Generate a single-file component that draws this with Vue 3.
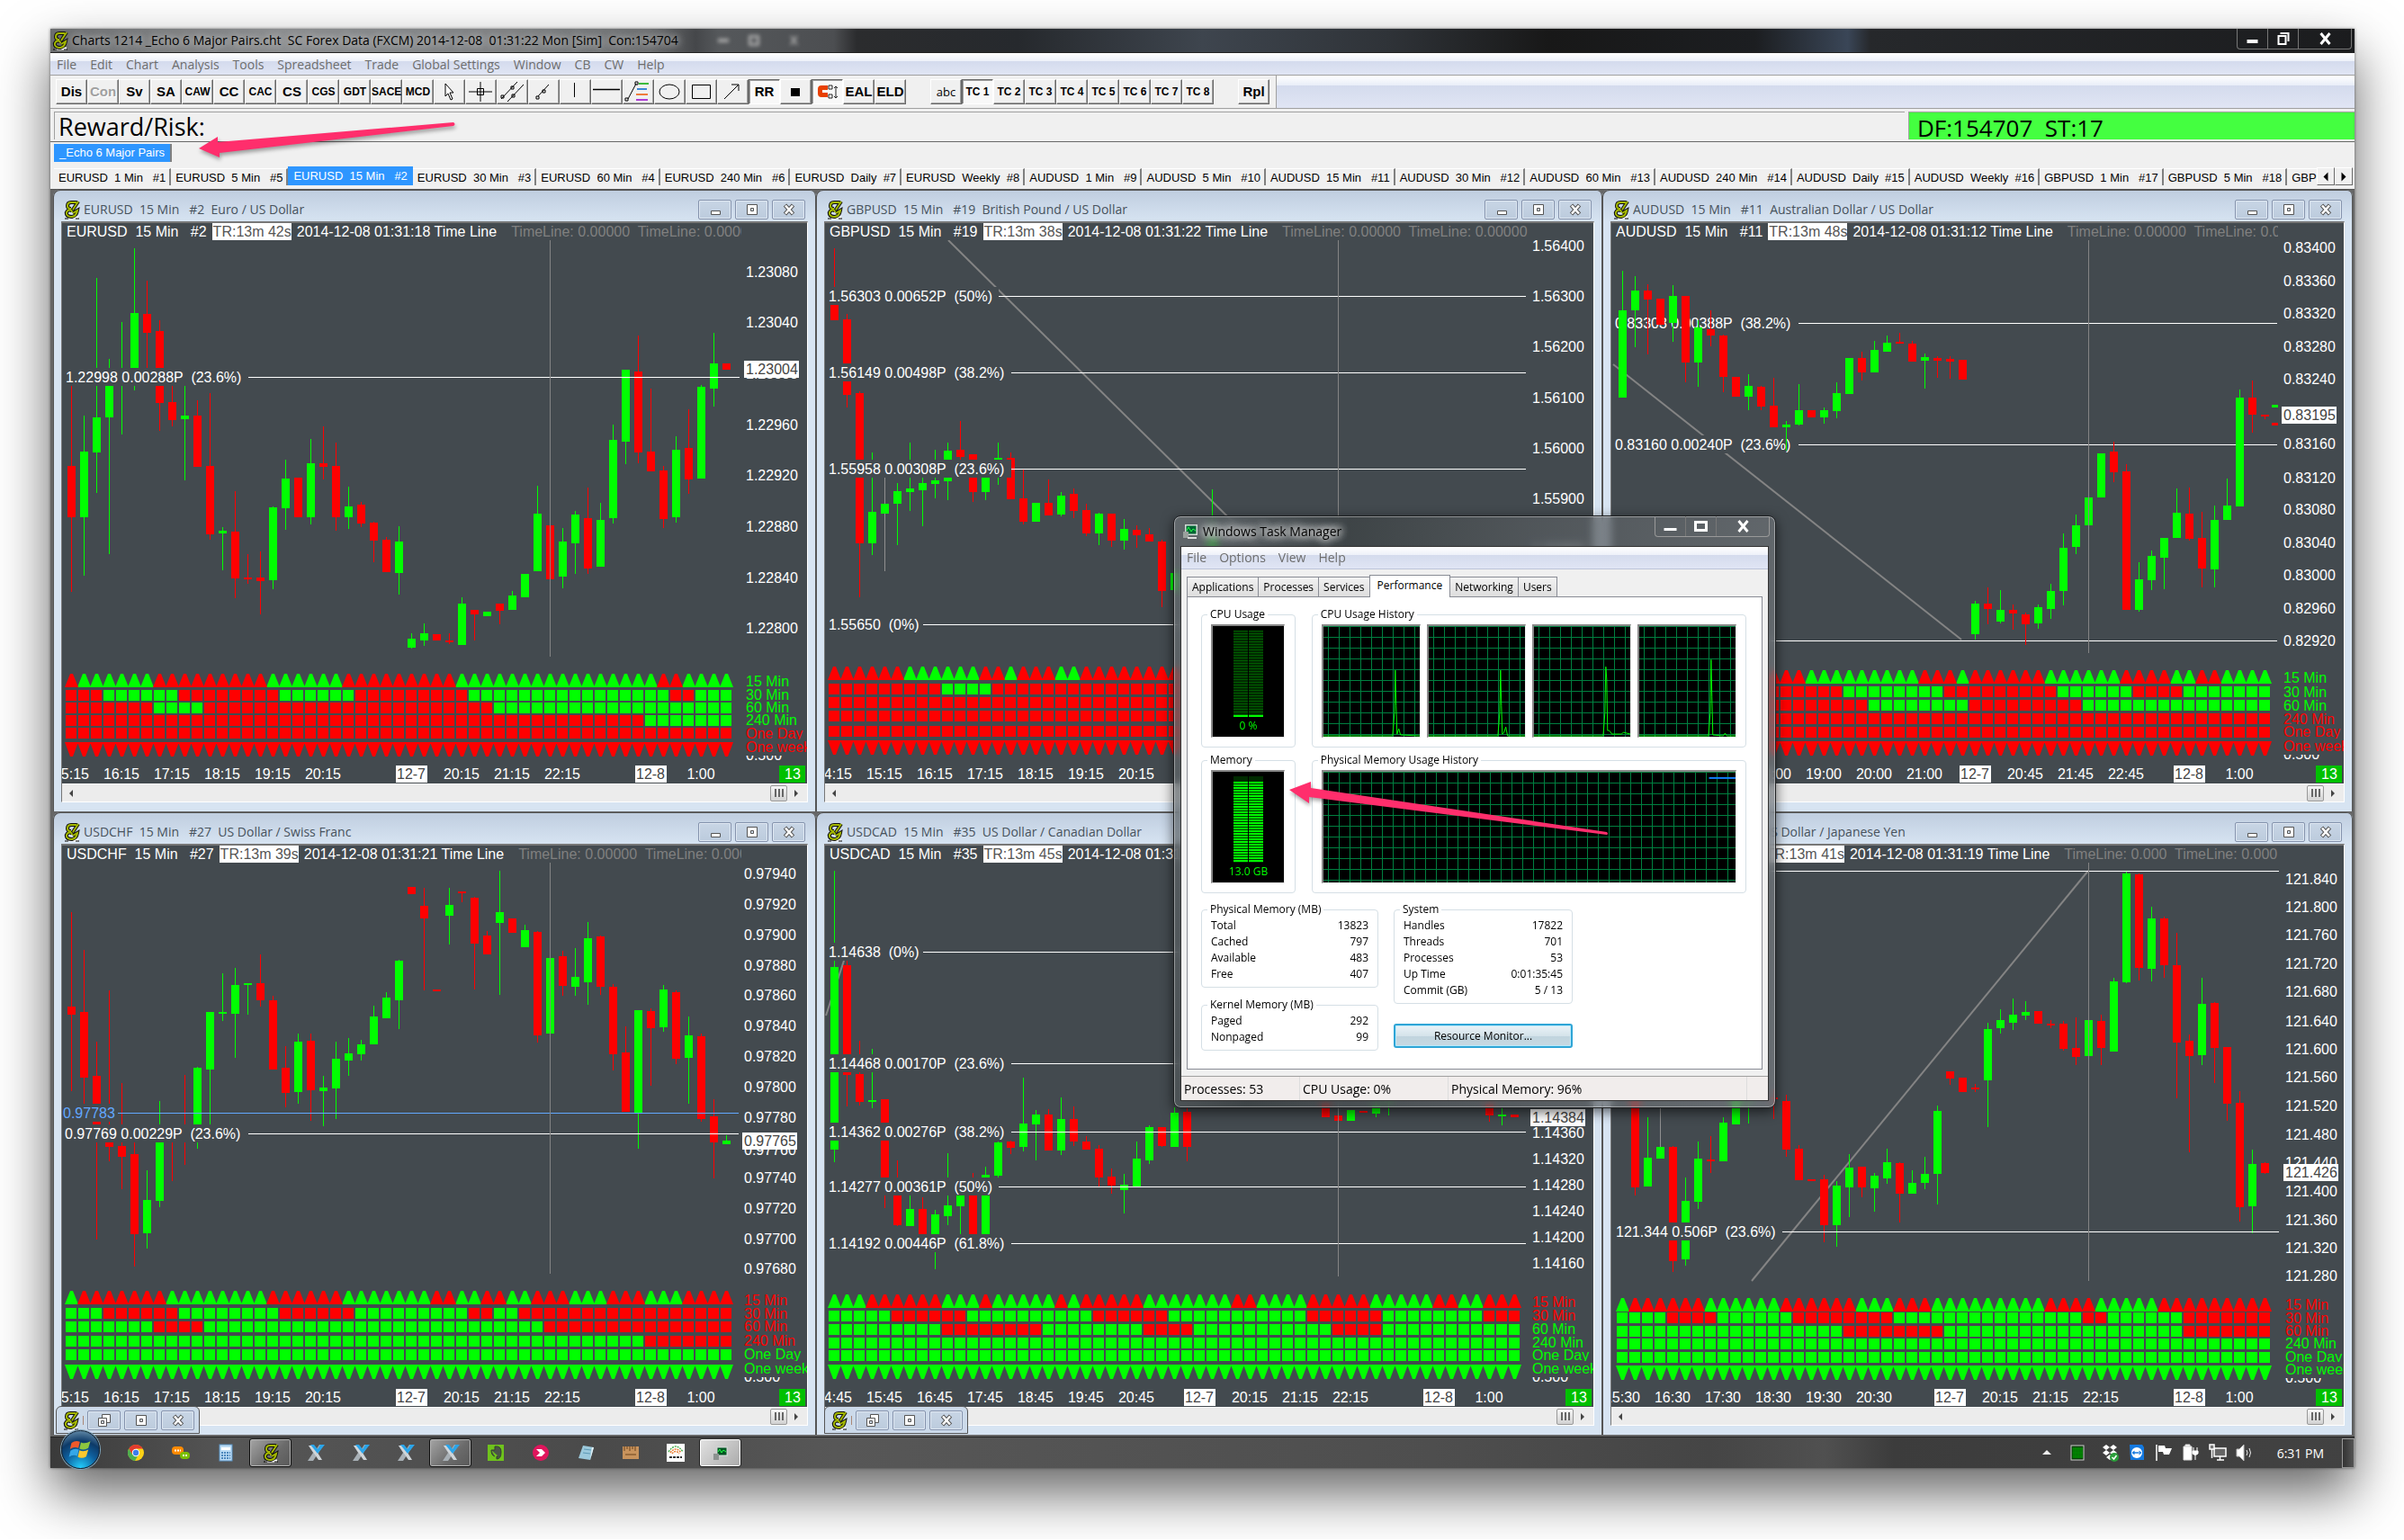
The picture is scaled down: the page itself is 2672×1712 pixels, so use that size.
<script setup>
const appTitle = 'Charts 1214 _Echo 6 Major Pairs.cht  SC Forex Data (FXCM) 2014-12-08  01:31:22 Mon [Sim]  Con:154704'
const feedStatus = 'DF:154707  ST:17'
const toolButtons = ['Dis', 'Con', 'Sv', 'SA', 'CAW', 'CC', 'CAC', 'CS', 'CGS', 'GDT', 'SACE', 'MCD']
const bigLabels = ['Dis', 'Con', 'Sv', 'SA', 'CC', 'CS']
const drawTools = ['cursor', 'cross', 'parallel', 'segment', 'vertical', 'horizontal', 'fib', 'ellipse', 'rect', 'arrow']
const presets = ['TC 1', 'TC 2', 'TC 3', 'TC 4', 'TC 5', 'TC 6', 'TC 7', 'TC 8']
const menus = ['File', 'Edit', 'Chart', 'Analysis', 'Tools', 'Spreadsheet', 'Trade', 'Global Settings', 'Window', 'CB', 'CW', 'Help']
const chartTabs = [
  'EURUSD  1 Min   #1', 'EURUSD  5 Min   #5', 'EURUSD  15 Min   #2', 'EURUSD  30 Min   #3', 'EURUSD  60 Min   #4',
  'EURUSD  240 Min   #6', 'EURUSD  Daily  #7', 'EURUSD  Weekly  #8', 'AUDUSD  1 Min   #9', 'AUDUSD  5 Min   #10',
  'AUDUSD  15 Min   #11', 'AUDUSD  30 Min   #12', 'AUDUSD  60 Min   #13', 'AUDUSD  240 Min   #14', 'AUDUSD  Daily  #15',
  'AUDUSD  Weekly  #16', 'GBPUSD  1 Min   #17', 'GBPUSD  5 Min   #18', 'GBPUSD  15 Min   #19'
]

const frames = ['15 Min', '30 Min', '60 Min', '240 Min', 'One Day', 'One week']
const upperScale = { y: 200, k: 2.178 }
const lowerScale = { y: 900, k: 1.931 }

/* candles: colour, high, body top, body bottom, low; "-" leaves a slot empty.
   rows: run lengths per timeframe. */
const source = [
  {
    sym: 'EURUSD', no: '#2', name: 'Euro / US Dollar', left: '13m 42s', at: '01:31:18', tl: '0.00000',
    view: [69, 267, 828, 604], scale: upperScale, x0: 79, axis: 829, vline: [39, 147, 1154], right: 822,
    candles: 'r497,693,817,998 g571,658,817,958 g237,575,661,757 g433,470,574,906 g344,470,478,616 g166,322,480,510 r245,324,370,480 r340,366,540,607 r497,538,581,597 g497,571,579,727 r534,571,695,695 r517,693,859,871 g840,849,857,945 r753,851,965,1013 r907,963,967,977 r899,963,971,1051 g791,793,969,991 g677,723,795,847 r721,721,817,817 g627,686,817,834 r597,686,695,725 r636,693,817,849 g743,791,817,845 r780,787,832,841 r827,829,873,925 r865,871,949,949 g838,875,951,1003 g1098,1111,1132,1135 g1074,1098,1115,1128 r1099,1099,1116,1116 r1097,1115,1118,1124 g1010,1026,1126,1126 r1041,1041,1053,1115 g1045,1045,1056,1056 r1025,1025,1043,1076 g995,1006,1041,1041 g953,954,1010,1010 g740,808,947,947 r837,837,967,967 g843,875,960,989 g801,810,880,955 r745,819,941,955 g782,823,936,936 g592,629,819,831 g459,460,634,688 r376,464,661,687 r505,658,706,706 r693,703,821,843 g621,653,817,829 r556,649,725,760 g497,501,723,723 g371,444,505,548 r444,444,459,459',
    fibs: [[476, '1.22998 0.00288P  (23.6%)', 73, 276]],
    prices: [['1.23080', 222], ['1.23040', 345], ['1.23000', 468], ['1.22960', 592], ['1.22920', 715], ['1.22880', 839], ['1.22840', 963], ['1.22800', 1085]],
    last: ['1.23004', 458], rowY: [1195, 1234, 1265, 1296, 1326, 1361],
    rows: ['r1g6r9g6r9g16r2g4', 'r3g6r8g6r9g16r2g3', 'r7g4r23g19', 'r46g7', 'r53', 'r53'], tags: 'ggggrr', tagY: [1213, 1246, 1276, 1307, 1339, 1372],
    times: [[0, '15:15'], [4, '16:15'], [8, '17:15'], [12, '18:15'], [16, '19:15'], [20, '20:15'], [27, '12-7'], [31, '20:15'], [35, '21:15'], [39, '22:15'], [46, '12-8'], [50, '1:00']]
  },
  {
    sym: 'GBPUSD', no: '#19', name: 'British Pound / US Dollar', left: '13m 38s', at: '01:31:22', tl: '0.00000',
    view: [917, 267, 854, 604], scale: upperScale, x0: 927, axis: 1703, vline: [40, 147, 1154], right: 1696,
    candles: 'r166,290,339,339 r324,338,520,550 r511,517,879,1010 g660,804,879,908 n720,784,808,947 g734,753,784,884 g637,747,756,802 g720,733,751,838 g653,727,736,771 g637,655,730,775 r583,653,671,690 r664,665,755,780 g720,722,755,775 g637,672,710,738 r659,673,773,773 r700,771,827,835 g782,782,828,828 r725,782,813,813 g756,764,811,814 r746,761,801,818 r784,800,857,862 g806,807,857,884 r808,808,873,888 g822,844,873,896 r836,847,861,891 r843,859,875,875 r871,875,995,1034 g940,951,993,1000 - - g749,860,930,940',
    fibs: [[280, '1.56303 0.00652P  (50%)', 921, 1110], [467, '1.56149 0.00498P  (38.2%)', 921, 1124], [700, '1.55958 0.00308P  (23.6%)', 921, 1124], [1075, '1.55650  (0%)', 921, 1026]],
    diag: [1054, 147, 1450, 1000],
    prices: [['1.56400', 160], ['1.56300', 281], ['1.56200', 403], ['1.56100', 527], ['1.56000', 649], ['1.55900', 771], ['1.55800', 894]],
    rowY: [1178, 1219, 1253, 1286, 1321, 1357],
    rows: ['r6g6r2g1r3g2r35', 'r9g4r42', 'r55', 'r55', 'r55', 'r55'], tags: 'rrrrrr', tagY: [1205, 1239, 1271, 1304, 1336, 1369],
    times: [[0, '14:15'], [4, '15:15'], [8, '16:15'], [12, '17:15'], [16, '18:15'], [20, '19:15'], [24, '20:15']]
  },
  {
    sym: 'AUDUSD', no: '#11', name: 'Australian Dollar / US Dollar', left: '13m 48s', at: '01:31:12', tl: '0.00000',
    view: [1791, 267, 814, 604], scale: upperScale, x0: 1803, axis: 2538, vline: [37, 147, 1145], right: 2531, under: true,
    candles: 'g219,316,527,527 g233,268,316,405 r253,267,290,422 r288,288,350,350 g255,281,347,393 r281,281,443,490 g340,357,442,501 r315,362,377,404 r375,376,477,514 r477,477,525,525 g470,499,525,558 r498,502,549,557 r480,547,600,600 g584,592,600,656 g494,557,592,595 r557,557,575,575 g550,558,575,591 g491,516,560,578 g431,431,519,519 r416,431,467,485 g390,412,467,467 g376,394,416,416 r371,391,395,395 r390,396,440,440 g420,429,438,505 r426,431,437,480 r427,434,439,481 r436,436,484,484 g1019,1026,1100,1113 r987,1025,1039,1076 g993,1041,1069,1074 r1028,1041,1049,1088 r1048,1051,1077,1125 g1028,1034,1074,1086 g978,995,1039,1062 g856,891,995,1030 g810,836,889,906 g769,769,836,836 g662,662,769,769 r633,658,708,732 r688,706,1040,1040 g926,967,1041,1046 g897,910,969,993 g866,866,915,990 g747,806,867,867 r745,808,870,874 r804,866,941,987 g788,823,943,987 g723,788,823,823 g507,527,791,791 r485,528,568,612 r568,568,571,580',
    marks: [['g', 2525, 544], ['r', 2525, 589]],
    fibs: [[347, '0.83303 0.00388P  (38.2%)', 1795, 1999], [640, '0.83160 0.00240P  (23.6%)', 1795, 1999], [1115, '0.82920  (0%)', 1795, 1900]],
    diag: [1793, 446, 2180, 1114],
    prices: [['0.83400', 164], ['0.83360', 243], ['0.83320', 323], ['0.83280', 402], ['0.83240', 482], ['0.83200', 561], ['0.83160', 639], ['0.83120', 720], ['0.83080', 798], ['0.83040', 877], ['0.83000', 957], ['0.82960', 1036], ['0.82920', 1116]],
    last: ['0.83195', 569], rowY: [1187, 1226, 1259, 1291, 1324, 1359],
    rows: ['r15g9r3g1r6g6r4g2r2g4', 'r18g8r9g6r4g7', 'r20g8r9g15', 'r52', 'r52', 'r52'], tags: 'gggrrr', tagY: [1205, 1239, 1271, 1304, 1336, 1369],
    times: [[12, '18:00'], [16, '19:00'], [20, '20:00'], [24, '21:00'], [28, '12-7'], [32, '20:45'], [36, '21:45'], [40, '22:45'], [45, '12-8'], [49, '1:00']]
  },
  {
    sym: 'USDCHF', no: '#27', name: 'US Dollar / Swiss Franc', left: '13m 39s', at: '01:31:21', tl: '0.00000',
    view: [69, 959, 828, 605], scale: lowerScale, x0: 79, axis: 827, vline: [39, 114, 996], right: 821, docked: true,
    candles: 'r221,423,440,605 r301,434,575,632 r499,572,677,923 r388,676,724,755 r587,722,745,815 r715,740,911,980 g774,838,910,942 g626,690,840,854 r675,690,694,797 r570,690,694,763 g553,554,677,728 g434,434,558,677 g351,434,437,454 g340,377,438,533 g373,373,377,440 r311,372,409,422 r400,409,558,558 r507,554,608,640 g481,498,606,631 r480,496,602,668 g572,597,604,680 g498,535,599,664 g490,523,539,572 g494,504,525,539 g421,444,504,504 g392,404,448,448 g323,324,409,471 r167,167,182,182 r168,206,234,388 r387,387,389,389 g168,205,228,290 r176,176,179,199 r188,190,288,387 r261,271,311,311 g131,220,243,398 r233,234,265,265 g247,259,295,295 r261,263,484,501 g319,319,481,481 r304,315,378,400 g297,359,380,400 g241,276,370,419 r271,273,381,397 r374,381,525,560 r466,521,649,649 g431,431,650,728 r426,433,470,592 g377,386,467,477 r389,392,535,546 g444,485,533,631 r480,487,664,670 r621,659,715,792 g699,711,718,718',
    fibs: [[650, '0.97783', 70, 131, '#62a8ff'], [696, '0.97769 0.00229P  (23.6%)', 72, 276]],
    prices: [['0.97940', 138], ['0.97920', 203], ['0.97900', 269], ['0.97880', 335], ['0.97860', 398], ['0.97840', 464], ['0.97820', 529], ['0.97800', 595], ['0.97780', 660], ['0.97760', 730], ['0.97740', 790], ['0.97720', 856], ['0.97700', 922], ['0.97680', 985]],
    last: ['0.97765', 711], rowY: [1033, 1070, 1099, 1130, 1159, 1191],
    rows: ['g1r7g8r6g7r2g2r2g2r3g3r3g3r4', 'g3r6g8r6g9r2g2r17', 'g7r4g27r15', 'g46r7', 'g53', 'g53'], tags: 'rrrrgg', tagY: [1052, 1081, 1109, 1140, 1169, 1200],
    times: [[0, '15:15'], [4, '16:15'], [8, '17:15'], [12, '18:15'], [16, '19:15'], [20, '20:15'], [27, '12-7'], [31, '20:15'], [35, '21:15'], [39, '22:15'], [46, '12-8'], [50, '1:00']]
  },
  {
    sym: 'USDCAD', no: '#35', name: 'US Dollar / Canadian Dollar', left: '13m 45s', at: '01:31:22', tl: '0.00000',
    view: [917, 959, 854, 605], scale: lowerScale, x0: 927, axis: 1703, vline: [40, 114, 1003], right: 1696, docked: true,
    candles: 'g131,338,730,756 r324,334,570,637 r497,568,628,635 g514,624,627,641 r621,622,792,855 r753,800,893,895 g810,857,895,895 r832,857,911,911 g859,869,915,987 g738,850,873,892 g825,828,852,911 r780,820,911,911 g767,784,911,911 g712,714,785,792 r710,713,727,740 g575,674,725,734 g645,655,676,753 r643,654,731,731 g618,664,731,742 r637,664,713,722 r700,713,730,730 r720,728,790,809 r771,787,808,825 g782,806,817,867 g713,749,809,809 g678,682,753,761 r681,682,723,725 g640,650,725,725 r640,649,725,755 - - - - - - - - - - r620,630,660,660 r657,657,669,669 g645,645,668,668 r647,647,651,651 g620,635,653,661 g600,620,622,656 - - - - - - - r620,632,657,671 g640,655,658,678 r655,655,661,661',
    fibs: [[306, '1.14638  (0%)', 921, 1026], [544, '1.14468 0.00170P  (23.6%)', 921, 1124], [692, '1.14362 0.00276P  (38.2%)', 921, 1124], [810, '1.14277 0.00361P  (50%)', 921, 1110], [930, '1.14192 0.00446P  (61.8%)', 921, 1124]],
    diag: [918, 443, 938, 324],
    prices: [['1.14360', 694], ['1.14320', 750], ['1.14280', 806], ['1.14240', 862], ['1.14200', 918], ['1.14160', 974]],
    last: ['1.14384', 661], rowY: [1041, 1076, 1105, 1134, 1161, 1191],
    rows: ['g3r6g3r1g5r1g1r5g7r2g4r5g5r2g2r3', 'g5r6g10r6g11r6g8r3', 'g9r8g8r4g11r4g11', 'g55', 'g55', 'g55'], tags: 'rrgggg', tagY: [1057, 1086, 1114, 1143, 1171, 1200],
    times: [[0, '14:45'], [4, '15:45'], [8, '16:45'], [12, '17:45'], [16, '18:45'], [20, '19:45'], [24, '20:45'], [29, '12-7'], [33, '20:15'], [37, '21:15'], [41, '22:15'], [48, '12-8'], [52, '1:00']]
  },
  {
    sym: 'USDJPY', no: '#43', name: 'US Dollar / Japanese Yen', left: '13m 41s', at: '01:31:19', tl: '0.000',
    view: [1791, 959, 814, 605], scale: lowerScale, x0: 1803, axis: 2540, vline: [37, 114, 1011], right: 2533,
    candles: '- r600,600,811,828 g660,747,809,809 n640,724,749,749 r722,724,969,993 g790,840,966,979 g713,749,842,858 r701,751,755,780 g660,672,755,755 g600,600,676,676 g600,618,620,674 - r600,618,620,665 r612,626,730,746 r720,728,795,795 r793,793,795,795 r784,794,893,928 g798,807,893,938 g740,769,811,874 r767,767,811,832 g780,786,813,863 g728,757,792,803 r757,758,825,886 g774,801,825,825 g745,782,801,815 g635,647,782,847 r561,562,577,591 r575,575,607,607 r588,596,600,607 g457,471,581,682 g429,452,469,481 g406,440,458,474 g411,434,442,451 r433,433,460,460 r452,459,463,470 r454,459,514,518 r446,512,531,549 g452,452,529,529 r441,454,512,549 g361,369,519,519 g132,138,371,373 r138,139,340,367 g209,234,342,369 r230,234,334,361 r265,334,500,619 r483,496,529,735 g361,417,527,549 r414,416,512,587 r509,510,631,669 r604,629,854,885 g730,761,852,909 r757,758,780,783',
    fibs: [[131, '121.850  (0%)', 1795, 1900], [905, '121.344 0.506P  (23.6%)', 1796, 1981]],
    diag: [1947, 1011, 2321, 131],
    prices: [['121.840', 148], ['121.800', 209], ['121.760', 269], ['121.720', 331], ['121.680', 391], ['121.640', 453], ['121.600', 514], ['121.560', 574], ['121.520', 636], ['121.480', 697], ['121.440', 757], ['121.400', 819], ['121.360', 880], ['121.320', 941], ['121.280', 1001]],
    last: ['121.426', 779], rowY: [1049, 1080, 1108, 1136, 1164, 1193],
    rows: ['g1r6g6r6g3r3g9r4g5r9', 'g4r4g6r8g15r2g6r7', 'g18r8g19r7', 'g52', 'g52', 'g52'], tags: 'rrrggg', tagY: [1063, 1091, 1118, 1146, 1174, 1202],
    times: [[0, '15:30'], [4, '16:30'], [8, '17:30'], [12, '18:30'], [16, '19:30'], [20, '20:30'], [26, '12-7'], [30, '20:15'], [34, '21:15'], [38, '22:15'], [45, '12-8'], [49, '1:00']]
  }
]

const PITCH = 14
const color = { g: '#00ff00', r: '#ff0000', n: '#00ff00' }

const charts = source.map((c) => {
  const Y = (v) => Math.round(c.scale.y + v / c.scale.k)
  const bars = []
  c.candles.split(' ').forEach((s, i) => {
    if (s === '-') return
    const [h, t, b, l] = s.slice(1).split(',').map(Number)
    const x = c.x0 + i * PITCH
    bars.push({ x, h: Y(h), t: Y(t), b: Math.max(Y(b), Y(t) + 2), l: Y(l), c: color[s[0]], wick: s[0] === 'n' ? '#909090' : color[s[0]] })
  })
  const cells = []
  const triangles = { g: '', r: '' }
  c.rows.forEach((runs, r) => {
    let slot = 0
    const y = Y(c.rowY[r])
    for (const [, k, n] of runs.matchAll(/([gr])(\d+)/g)) {
      for (let j = 0; j < Number(n); j++, slot++) {
        const x = c.x0 + slot * PITCH
        if (r === 0) triangles[k] += `M${x - 7} ${y + 15}h15l-6 -15h-3z`
        else if (r === 5) triangles[k] += `M${x - 7} ${y}h15l-6 16h-3z`
        else cells.push({ x: x - 6, y, c: color[k] })
      }
    }
  })
  const bottom = c.view[1] + c.view[3]
  return {
    ...c,
    bars, cells, triangles,
    title: `${c.sym}  15 Min   ${c.no}  ${c.name}`,
    vb: c.view.join(' '),
    vx: c.x0 + c.vline[0] * PITCH - (c.x0 === 79 ? 14 : 0),
    vy1: Y(c.vline[1]), vy2: Y(c.vline[2]),
    lines: c.fibs.map(([v, text, x, from, stroke]) => ({ y: Y(v), text, x, from, stroke: stroke || '#ffffff' })),
    slope: c.diag && { x1: c.diag[0], y1: Y(c.diag[1]), x2: c.diag[2], y2: Y(c.diag[3]) },
    ticks: c.prices.map(([text, v]) => ({ text, y: Y(v) })),
    lastPrice: c.last && { text: c.last[0], y: Y(c.last[1]) },
    extra: (c.marks || []).map(([k, x, v]) => ({ x, y: Y(v), c: color[k] })),
    labels: frames.map((text, i) => ({ text, y: Y(c.tagY[i]), c: color[c.tags[i]] })),
    stamps: c.times.map(([slot, text]) => ({ text, x: c.x0 + slot * PITCH, day: text.includes('-') })),
    timeY: bottom - 11,
    badgeX: c.view[0] + c.view[2] - 31
  }
})

const physical = [['Total', '13823'], ['Cached', '797'], ['Available', '483'], ['Free', '407']]
const kernel = [['Paged', '292'], ['Nonpaged', '99']]
const system = [['Handles', '17822'], ['Threads', '701'], ['Processes', '53'], ['Up Time', '0:01:35:45'], ['Commit (GB)', '5 / 13']]
const taskTabs = ['Applications', 'Processes', 'Services', 'Performance', 'Networking', 'Users']
const cpuTraces = [
  'M0 124H79L81 98L82 50L83 90L84 122L86 116L88 123L110 124',
  'M0 124H79L81 98L82 50L83 90L84 122L86 120L88 114L90 124H110',
  'M0 124H79L81 98L82 46L83 60L84 118L86 118L89 122L100 122L102 120L110 122',
  'M0 124H79L81 98L82 38L83 80L84 123L96 124L98 121L100 124H110'
]
const apps = [
  ['chrome', 'Chrome'], ['joinme', 'join.me'], ['calc', 'Calculator'], ['chart', 'Charts', 'on'], ['x', 'X one'], ['x', 'X two'], ['x', 'X three'],
  ['x', 'X four', 'on'], ['evernote', 'Evernote'], ['pink', 'Remote'], ['note', 'Notepad'], ['ruler', 'Ruler'], ['alpari', 'Alpari'], ['monitor', 'Task Manager', 'lit']
]
</script>

<template>
  <main class="shell">
    <svg class="defs" width="0" height="0" aria-hidden="true">
      <symbol id="logo" viewBox="0 0 18 22">
        <path d="M3 20h13" stroke="#fff" stroke-width="3" />
        <path d="M1 21h4m8 0h4" stroke="#000" />
        <path d="M16 2L10 11M14 3H8Q4 3 4 7q0 3 4 3M4 12q5-2 5 2M8 11q-6 1-5 5 1 3 6 3 5-1 6-7l-5 3" fill="none" stroke="#111" stroke-width="4" />
        <path d="M16 2L10 11M14 3H8Q4 3 4 7q0 3 4 3M4 12q5-2 5 2M8 11q-6 1-5 5 1 3 6 3 5-1 6-7l-5 3" fill="none" stroke="#a4b800" stroke-width="2" />
      </symbol>
      <symbol id="g-min" viewBox="0 0 16 16"><path d="M3.500 9.500h10v4h-10z" fill="#fff" stroke="#555" /></symbol>
      <symbol id="g-max" viewBox="0 0 16 16"><path d="M2.500 2.500h11v11h-11z" fill="#fff" stroke="#555" /><path d="M6.500 6.500h3v3h-3z" fill="#d0dcea" stroke="#555" /></symbol>
      <symbol id="g-restore" viewBox="0 0 16 16"><path d="M5.500 1.500h9v9h-9z" fill="#fff" stroke="#555" /><path d="M1.500 5.500h9v9h-9z" fill="#fff" stroke="#555" /><path d="M4.500 8.500h3v3h-3z" fill="#d0dcea" stroke="#555" /></symbol>
      <symbol id="g-close" viewBox="0 0 16 16"><path d="M3.500 3l9 10M12.500 3l-9 10" stroke="#555" stroke-width="4.600" /><path d="M4 3.500l8 9M12 3.500l-8 9" stroke="#fff" stroke-width="2.600" /></symbol>
    </svg>

    <header class="titlebar">
      <svg class="logo"><use href="#logo" /></svg>
      <h1>{{ appTitle }}</h1>
      <span class="ghost" aria-hidden="true"><i></i><i class="sq"></i><i class="x">X</i></span>
      <div class="syscmds">
        <button aria-label="Minimize"><svg viewBox="0 0 16 16"><path d="M2 9h12v4H2z" fill="#fff" /></svg></button>
        <button aria-label="Restore"><svg viewBox="0 0 16 16"><path d="M5 2h9v9M3 5h8v9H3z" fill="none" stroke="#fff" stroke-width="2" /></svg></button>
        <button class="wide" aria-label="Close"><svg viewBox="0 0 16 16"><path d="M3 2l10 12M13 2L3 14" stroke="#fff" stroke-width="3" /></svg></button>
      </div>
    </header>

    <nav class="menubar"><button v-for="m in menus" :key="m">{{ m }}</button></nav>

    <div class="toolbar">
      <div class="tools">
        <button v-for="b in toolButtons" :key="b" :class="{ big: bigLabels.includes(b), dim: b === 'Con' }">{{ b }}</button>
        <button v-for="t in drawTools" :key="t" :aria-label="t">
          <svg class="tool" viewBox="0 0 32 24" fill="none" stroke="#000">
            <path v-if="t === 'cursor'" d="M12 3v14l3-3 3 7 2-1-3-7h4z" fill="#fff" />
            <path v-else-if="t === 'cross'" d="M16 1v22M3 12h26M12.500 8.500h7v7h-7z" />
            <path v-else-if="t === 'parallel'" d="M4 20L22 1M11 23L29 4M4 16h3v3H4zM15 6h3v3h-3zM16 15h3v3h-3z" />
            <path v-else-if="t === 'segment'" d="M10 17L22 4M8 17h3v3H8zM15 10h3v3h-3z" />
            <path v-else-if="t === 'vertical'" d="M15.500 2v16" />
            <path v-else-if="t === 'horizontal'" d="M1 9.500h30" stroke-width="1.500" />
            <g v-else-if="t === 'fib'">
              <path d="M5 20L14 3M2 19h3v3H2zM13 1h3v3h-3z" />
              <path d="M17 3h11" stroke="#0a0" stroke-width="1.500" /><path d="M15 9h11" stroke="#06c" stroke-width="1.500" />
              <path d="M14 15h13" stroke="#e50" stroke-width="1.500" /><path d="M14 21h13" stroke="#90c" stroke-width="1.500" />
            </g>
            <ellipse v-else-if="t === 'ellipse'" cx="16" cy="12" rx="11" ry="8" />
            <path v-else-if="t === 'rect'" d="M6.500 4.500h20v15h-20z" />
            <path v-else d="M7 20L23 4M15 4h8v7" />
          </svg>
        </button>
        <button class="big down">RR</button>
        <button aria-label="Stop"><svg class="tool" viewBox="0 0 32 24"><path d="M11 8h10v9H11z" /></svg></button>
        <button class="down" aria-label="Magnet">
          <svg class="tool" viewBox="0 0 32 24"><path d="M17 5H10Q6 5 6 9v5q0 4 4 4h7v-5h-6v-3h6z" fill="#e84000" /><path d="M18 5h4v4h-4zM18 15h4v4h-4zM26 6v13m-2-2l2 2 2-2M24 8l2-2 2 2" fill="none" stroke="#222" /></svg>
        </button>
        <button class="big">EAL</button><button class="big">ELD</button>
        <button class="plain gap">abc</button>
        <button v-for="p in presets" :key="p" :class="{ down: p === 'TC 1' }">{{ p }}</button>
        <button class="big gap">Rpl</button>
      </div>
    </div>

    <div class="status"><span class="rr">Reward/Risk:</span><span class="feed">{{ feedStatus }}</span></div>

    <div class="books"><button class="tab on">_Echo 6 Major Pairs</button></div>
    <div class="tabs">
      <div class="strip"><button v-for="(t, i) in chartTabs" :key="t" class="tab" :class="{ on: i === 2 }">{{ t }}</button></div>
      <button class="scroll" aria-label="Scroll tabs left"><svg viewBox="0 0 8 10"><path d="M6 1v8L2 5z" /></svg></button>
      <button class="scroll" aria-label="Scroll tabs right"><svg viewBox="0 0 8 10"><path d="M2 1v8l4-4z" /></svg></button>
    </div>

    <section class="mdi">
      <article v-for="c in charts" :key="c.sym" class="child">
        <header class="caption">
          <svg class="logo"><use href="#logo" /></svg>
          <h2>{{ c.title }}</h2>
          <button aria-label="Minimize"><svg><use href="#g-min" /></svg></button>
          <button aria-label="Maximize"><svg><use href="#g-max" /></svg></button>
          <button aria-label="Close"><svg><use href="#g-close" /></svg></button>
        </header>
        <div class="frame">
          <p class="info">
            <span>{{ `${c.sym}  15 Min   ${c.no}` }}</span><mark>TR:{{ c.left }}</mark><span>2014-12-08 {{ c.at }} Time Line</span>
            <span class="muted">{{ `TimeLine: ${c.tl}  TimeLine: ${c.tl}` }}</span>
          </p>
          <svg class="plot" :viewBox="c.vb">
            <g v-if="c.slope"><line :x1="c.slope.x1" :y1="c.slope.y1" :x2="c.slope.x2" :y2="c.slope.y2" stroke="#848484" stroke-width="2" /></g>
            <component :is="'g'" v-for="pass in (c.under ? ['fib', 'bars'] : ['bars', 'fib'])" :key="pass">
              <g v-if="pass === 'bars'" shape-rendering="crispEdges">
                <template v-for="b in c.bars" :key="b.x">
                  <rect :x="b.x" :y="b.h" width="1" :height="b.l - b.h" :fill="b.wick" />
                  <rect :x="b.x - 4" :y="b.t" width="9" :height="b.b - b.t" :fill="b.c" />
                </template>
                <rect v-for="m in c.extra" :key="m.y" :x="m.x" :y="m.y" width="7" height="3" :fill="m.c" />
              </g>
              <g v-else>
                <template v-for="f in c.lines" :key="f.y">
                  <rect :x="f.x" :y="f.y - 10" :width="f.from - f.x" height="20" fill="#434a4f" />
                  <text :x="f.x" :y="f.y + 6" :fill="f.stroke">{{ f.text }}</text>
                  <rect :x="f.from" :y="f.y" :width="c.right - f.from" height="1" :fill="f.stroke" />
                </template>
              </g>
            </component>
            <rect :x="c.vx" :y="c.vy1" width="1" :height="c.vy2 - c.vy1" fill="#848484" />
            <text v-for="t in c.ticks" :key="t.y" :x="c.axis" :y="t.y + 6">{{ t.text }}</text>
            <g v-if="c.lastPrice">
              <rect :x="c.axis - 2" :y="c.lastPrice.y - 9" width="61" height="19" fill="#fff" />
              <text :x="c.axis" :y="c.lastPrice.y + 6" class="dark">{{ c.lastPrice.text }}</text>
            </g>
            <path :d="c.triangles.g" fill="#00ff00" /><path :d="c.triangles.r" fill="#ff0000" />
            <rect v-for="q in c.cells" :key="q.x + '-' + q.y" :x="q.x" :y="q.y" width="12" height="12" :fill="q.c" shape-rendering="crispEdges" />
            <text :x="c.axis" :y="c.labels[5].y + 15">0.500</text>
            <g v-for="l in c.labels" :key="l.text">
              <rect :x="c.axis - 1" :y="l.y - 8" width="90" height="18" fill="#434a4f" />
              <text :x="c.axis" :y="l.y + 6" :fill="l.c">{{ l.text }}</text>
            </g>
            <g v-for="s in c.stamps" :key="s.x">
              <rect v-if="s.day" :x="s.x - 17" :y="c.timeY - 9" width="35" height="19" fill="#fff" />
              <text :x="s.x" :y="c.timeY + 6" :class="{ dark: s.day }" text-anchor="middle">{{ s.text }}</text>
            </g>
            <rect :x="c.badgeX" :y="c.timeY - 9" width="29" height="19" fill="#00c000" />
            <text :x="c.badgeX + 15" :y="c.timeY + 6" text-anchor="middle">13</text>
          </svg>
          <div class="hscroll">
            <button aria-label="Scroll left"><svg viewBox="0 0 8 10"><path d="M6 1v8L2 5z" /></svg></button>
            <span class="track"></span>
            <button class="thumb" aria-label="Scroll position"><i></i><i></i><i></i></button>
            <button aria-label="Scroll right"><svg viewBox="0 0 8 10"><path d="M2 1v8l4-4z" /></svg></button>
          </div>
        </div>
        <div v-if="c.docked" class="docked">
          <svg class="logo"><use href="#logo" /></svg><i></i>
          <button aria-label="Restore"><svg><use href="#g-restore" /></svg></button>
          <button aria-label="Maximize"><svg><use href="#g-max" /></svg></button>
          <button aria-label="Close"><svg><use href="#g-close" /></svg></button>
        </div>
      </article>
    </section>

    <footer class="taskbar">
      <button class="orb" aria-label="Start">
        <svg viewBox="0 0 24 24">
          <path d="M3 6q4-3 8-1l-1.500 6q-4-2-8 1z" fill="#f0592a" /><path d="M12 5.500q4 2 9-1l-2 6.500q-4 2.500-8.500.500z" fill="#8cc63f" />
          <path d="M1 13.500q4-3 8-1l-1.500 6q-4-2-8 1z" transform="translate(1 0)" fill="#35a7e8" /><path d="M10.500 13q4 2 8.500-.500l-2 6.500q-4 2.500-8 .500z" fill="#fdc82f" />
        </svg>
      </button>
      <button v-for="a in apps" :key="a[1]" class="app" :class="a[2]" :aria-label="a[1]">
        <svg v-if="a[0] === 'chart'" class="logo"><use href="#logo" /></svg>
        <svg v-else class="ico" viewBox="0 0 20 20">
          <g v-if="a[0] === 'chrome'">
            <circle cx="10" cy="10" r="9" fill="#fbd116" /><path d="M2.200 5.500A9 9 0 0 1 17.800 5.500H10L6 12z" fill="#e33b2e" /><path d="M2.200 5.500A9 9 0 0 0 9 19l4-7H6z" fill="#4caf50" />
            <circle cx="10" cy="10" r="4.200" fill="#fff" /><circle cx="10" cy="10" r="3.200" fill="#3b7ded" />
          </g>
          <g v-else-if="a[0] === 'joinme'"><rect x="0" y="3" width="13" height="9" rx="4" fill="#ff8a00" /><rect x="9" y="9" width="11" height="8" rx="4" fill="#7ac000" /><path d="M3 7.500h7M12 13h5" stroke="#fff" stroke-width="2" stroke-dasharray="2 1" /></g>
          <g v-else-if="a[0] === 'calc'"><rect x="3" y="1" width="14" height="18" fill="#bcdcf5" stroke="#5b93c4" /><path d="M5 4h10v3H5z" fill="#fff" /><path d="M5 10h10M5 13h10M5 16h10" stroke="#4d88bd" stroke-width="2" stroke-dasharray="2 1" /></g>
          <g v-else-if="a[0] === 'x'"><path d="M2 2h5l3 5 4-6h5L7 19H1l6-9z" fill="#a8b0b6" /><path d="M2 2h5l10 16h-4z" fill="#cfd5d9" /><path d="M4 1h4l4 5 3-5h5l-8 10z" fill="#2aa5ea" /></g>
          <g v-else-if="a[0] === 'evernote'"><rect x="1" y="1" width="18" height="18" fill="#6fc31c" /><path d="M5 7h4V3q7-1 7 6 0 8-5 8v-3h2M5 7q0 6 4 7" fill="#4a5548" stroke="#33402f" /></g>
          <g v-else-if="a[0] === 'pink'"><circle cx="10" cy="10" r="9" fill="#e0155c" /><path d="M5 6l4 4-4 4h6l4-4-4-4z" fill="#fff" /></g>
          <g v-else-if="a[0] === 'note'"><path d="M7 2l12 2-4 14-13-2z" fill="#9cc9dc" /><path d="M15 18l4-14-2 0z" fill="#e9f3f7" /><path d="M8 6l8 1M7 10l8 1" stroke="#5b98b4" /></g>
          <g v-else-if="a[0] === 'ruler'"><path d="M1 3h18v14H1z" fill="#c8935c" /><path d="M3 3v5M6 3v3M9 3v5M12 3v3M15 3v5M4 12h12" stroke="#6b421c" /></g>
          <g v-else-if="a[0] === 'alpari'"><rect width="20" height="20" fill="#fff" /><path d="M4 10q6-8 12 0M6 11q4-5 8 0" fill="none" stroke="#e8792b" stroke-width="1.500" stroke-dasharray="2 1" /><path d="M2 9Q10-3 18 9" fill="none" stroke="#4caf50" stroke-width="1.500" stroke-dasharray="2 1" /><path d="M3 15h14" stroke="#333" stroke-width="2" stroke-dasharray="3 1" /></g>
          <g v-else><path d="M5 3h13v11H5z" fill="#cfd4d2" /><path d="M6.500 4.500h10v8h-10z" fill="#052" /><path d="M7 9l2-3 2 4 2-3 3 2" stroke="#2f4" fill="none" /><path d="M2 11h6v7H2z" fill="#8c9290" /></g>
        </svg>
      </button>
      <div class="tray">
        <svg viewBox="0 0 20 20"><path d="M5 12l5-5 5 5z" fill="#eee" /></svg>
        <svg viewBox="0 0 20 20"><rect x="3" y="2" width="14" height="16" fill="#0a3d0a" stroke="#ccc" /><path d="M5 4v12M8 4v12M11 4v12M14 4v12M4 6h12M4 10h12M4 14h12" stroke="#060" /><path d="M5 4h11v12H5z" fill="#0a0" fill-opacity="0.500" /></svg>
        <svg viewBox="0 0 20 20"><path d="M6 1l4 3-4 3-4-3zM14 1l4 3-4 3-4-3zM6 7l4 3-4 3-4-3zM14 7l4 3-4 3-4-3zM10 12l4 3-4 3-4-3z" fill="#fff" /><circle cx="15" cy="15" r="5" fill="#2a9d3a" /><path d="M12.500 15l2 2 3-4" stroke="#fff" fill="none" stroke-width="1.500" /></svg>
        <svg viewBox="0 0 20 20"><path d="M2 1h14l2 3v14H3z" fill="#1479e0" /><circle cx="10" cy="10" r="6" fill="#fff" /><path d="M4.500 10l3-2.500v5zM15.500 10l-3-2.500v5zM7 9.300h6v1.500H7z" fill="#1479e0" /></svg>
        <svg viewBox="0 0 20 20"><path d="M2 1v18" stroke="#fff" stroke-width="1.500" /><path d="M4 2h7l1 3h7l-3 7h-6l-1-3H4z" fill="#fff" /></svg>
        <svg viewBox="0 0 20 20"><path d="M2 3h9v15H2zM4 1h5v2H4z" fill="#fff" stroke="#ddd" /><path d="M13 4v4M17 4v4M12 8h6v3q-3 3-6 0zM15 12v6" stroke="#fff" fill="#fff" /></svg>
        <svg viewBox="0 0 20 20"><path d="M6 5h13v9H6z" fill="#666" stroke="#fff" stroke-width="1.500" /><path d="M9 18h8M12.500 14v4M1 1h5v5H1zM3.500 6v10" stroke="#fff" stroke-width="1.500" fill="#777" /></svg>
        <svg viewBox="0 0 20 20"><path d="M1 6h3l5-5v18l-5-5H1z" fill="#fff" stroke="#bbb" /><path d="M12 7q2 3 0 6M15 5q3 5 0 10" stroke="#eee" fill="none" /></svg>
      </div>
      <time class="clock">6:31 PM</time>
      <button class="peek" aria-label="Show desktop"></button>
    </footer>

    <section class="taskman">
      <header class="tmtitle">
        <svg class="ico" viewBox="0 0 20 20"><path d="M4 2h14v12H4z" fill="#d5dad7" /><path d="M5.500 3.500h11v9h-11z" fill="#063" /><path d="M6 9l2-4 3 5 2-3 3 2" stroke="#2f4" fill="none" /><path d="M2 10h6v7H2z" fill="#9aa09d" /><path d="M7 17h10" stroke="#ddd" stroke-width="2" /></svg>
        <h2>Windows Task Manager</h2>
        <div class="syscmds">
          <button aria-label="Minimize"><svg viewBox="0 0 16 16"><path d="M1 10h14v3H1z" fill="#fff" /></svg></button>
          <button aria-label="Maximize"><svg viewBox="0 0 16 16"><path d="M2 3.500h12v9H2z" fill="none" stroke="#fff" stroke-width="3" /></svg></button>
          <button class="wide" aria-label="Close"><svg viewBox="0 0 16 16"><path d="M3 2l10 12M13 2L3 14" stroke="#fff" stroke-width="3" /></svg></button>
        </div>
      </header>
      <div class="tmclient">
        <nav class="tmmenu"><button v-for="m in ['File', 'Options', 'View', 'Help']" :key="m">{{ m }}</button></nav>
        <div class="tmtabs"><button v-for="t in taskTabs" :key="t" :class="{ on: t === 'Performance' }">{{ t }}</button></div>
        <div class="page">
          <div class="meters">
            <fieldset class="narrow"><legend>CPU Usage</legend>
              <div class="gauge"><span class="bars"><i></i><i></i></span><output>0 %</output></div>
            </fieldset>
            <fieldset class="wide"><legend>CPU Usage History</legend>
              <div class="graphs">
                <svg v-for="(d, i) in cpuTraces" :key="i" class="graph" viewBox="0 0 110 125" preserveAspectRatio="none"><path :d="d" fill="none" stroke="#00ff00" /></svg>
              </div>
            </fieldset>
          </div>
          <div class="meters">
            <fieldset class="narrow"><legend>Memory</legend>
              <div class="gauge full"><span class="bars"><i></i><i></i></span><output>13.0 GB</output></div>
            </fieldset>
            <fieldset class="wide"><legend>Physical Memory Usage History</legend>
              <div class="graphs"><svg class="graph" viewBox="0 0 462 125" preserveAspectRatio="none"><path d="M432 7h30" stroke="#1080ff" stroke-width="2" /></svg></div>
            </fieldset>
          </div>
          <div class="facts">
            <div class="col">
              <fieldset><legend>Physical Memory (MB)</legend>
                <table><tbody><tr v-for="r in physical" :key="r[0]"><th scope="row">{{ r[0] }}</th><td>{{ r[1] }}</td></tr></tbody></table>
              </fieldset>
              <fieldset><legend>Kernel Memory (MB)</legend>
                <table><tbody><tr v-for="r in kernel" :key="r[0]"><th scope="row">{{ r[0] }}</th><td>{{ r[1] }}</td></tr></tbody></table>
              </fieldset>
            </div>
            <div class="col">
              <fieldset><legend>System</legend>
                <table><tbody><tr v-for="r in system" :key="r[0]"><th scope="row">{{ r[0] }}</th><td>{{ r[1] }}</td></tr></tbody></table>
              </fieldset>
              <button class="resmon">Resource Monitor...</button>
            </div>
          </div>
        </div>
        <footer class="tmstatus"><span>Processes: 53</span><span>CPU Usage: 0%</span><span>Physical Memory: 96%</span></footer>
      </div>
    </section>

    <svg class="arrows" viewBox="56 32 2561 1600" aria-hidden="true">
      <g fill="#ff2e6c">
        <path d="M221 165L242 152V158L504 136Q507 138 504 140L244 170V175z" />
        <path d="M1433 878L1457 869V876L1786 925Q1788 927 1786 928L1455 886V893z" />
      </g>
    </svg>
  </main>
</template>

<style>
body { background: #fff; }
</style>

<style scoped>
* { box-sizing: border-box; }
button { font: inherit; color: inherit; background: none; border: 0; padding: 0; margin: 0; }
h1, h2, p { margin: 0; font-weight: 400; white-space: pre; }
svg { display: block; }
.defs { position: absolute; }

.shell {
  position: relative; margin: 32px 55px 79px 56px; background: #f0f0f0;
  font-family: "Open Sans", "Noto Sans", sans-serif; font-size: 14px; color: #000;
  box-shadow: 0 28px 56px rgba(0, 0, 0, .6), 0 0 3px rgba(0, 0, 0, .5);
}
.logo { width: 18px; height: 22px; flex: none; }

.titlebar {
  display: flex; align-items: center; height: 27px; padding-left: 2px; border-bottom: 1px solid #222; overflow: hidden;
  background: linear-gradient(90deg, #6b6d6f 0, #8b8d8f 10%, #7d8082 20%, #6c6e70 26%, #45474a 28%, #55585b 29%, #4c4e51 34%, #2b2c2e 35%, #26292d 42%, #3e454e 50%, #2f3338 58%, #181818 65%, #1c1e21 74%, #3a4657 78%, #26282b 79%, #1b1c1e 100%);
}
.titlebar h1 { font-size: 14px; line-height: 26px; margin-left: 4px; text-shadow: 0 0 8px #ccc, 0 0 8px #bbb; }
.ghost { display: flex; align-items: center; gap: 22px; margin-left: 44px; filter: blur(2px); color: #aaa; }
.ghost i { width: 12px; height: 4px; background: #aaa; font-style: normal; }
.ghost .sq { height: 12px; border: 3px solid #aaa; background: none; }
.ghost .x { background: none; height: 20px; font-size: 14px; margin-left: 12px; font-weight: 700; }
.syscmds { display: flex; align-self: flex-start; margin-left: auto; margin-right: 3px; height: 23px; border: 1px solid #777; border-top: 0; border-radius: 0 0 4px 4px; }
.syscmds button { width: 34px; border-right: 1px solid #777; display: grid; place-items: center; }
.syscmds .wide { width: 58px; border: 0; }
.syscmds svg { width: 17px; height: 16px; }

.menubar { display: flex; gap: 15px; height: 25px; padding: 2px 7px; color: #6d6d6d; border-bottom: 1px solid #a0a0a0; background: linear-gradient(#fff, #eef1f9 36%, #d4dbed 37%, #e0e5f4); }
.toolbar { height: 37px; border-bottom: 1px solid #a0a0a0; background: linear-gradient(#fff, #e9eef8 30%, #d4dbed 31%, #e0e5f4); }
.tools { display: flex; width: max-content; height: 36px; padding: 4px 7px 4px 6px; background: #f0f0f0; border-right: 1px solid #a0a0a0; font: 700 12px/20px "Liberation Sans", Arial, sans-serif; }
.tools button { width: 35px; height: 28px; border: 1px solid; border-color: #fff #696969 #696969 #fff; box-shadow: inset -1px -1px #a0a0a0; white-space: nowrap; }
.tools .big { font-size: 15px; }
.tools .dim { color: #a0a0a0; text-shadow: 1px 1px #fff; }
.tools .down { background: #f8f8f8; border-color: #696969 #fff #fff #696969; box-shadow: inset 1px 1px #a0a0a0; }
.tools .plain { font: 13px "Open Sans", sans-serif; }
.tools .gap { margin-left: 27px; }
.tool { width: 32px; height: 24px; }

.status { display: flex; height: 37px; padding: 3px 0 2px 4px; border-bottom: 1px solid #696969; font-size: 26px; line-height: 31px; }
.status span { border-left: 1px solid #a0a0a0; border-top: 1px solid #a0a0a0; white-space: pre; }
.rr { flex: 1; padding-left: 4px; }
.status .rr { font-size: 27px; }
.feed { flex: 0 0 496px; margin-left: 4px; padding-left: 9px; line-height: 34px; background: #44ff40; overflow: hidden; }
.books { display: flex; padding: 2px 4px 0; height: 25px; }
.tab { font: 13px/20px "Liberation Sans", Arial, sans-serif; white-space: pre; border-right: 2px solid #808080; }
.tab.on { background: #2e96ff; color: #fff; }
.books .tab { padding: 0 6px; height: 20px; }
.tabs { display: flex; align-items: flex-end; height: 28px; padding: 0 2px 4px 4px; border-bottom: 1px solid #555; }
.strip { display: flex; align-items: flex-end; flex: 1; min-width: 0; overflow: hidden; }
.strip .tab { flex: none; height: 19px; padding: 0 4px 0 5px; border-top: 1px solid #fff; }
.strip .on { height: 21px; border: 0; padding: 0 6px; }
.scroll { width: 20px; height: 20px; border: 1px solid; border-color: #fff #696969 #696969 #fff; display: grid; place-items: center; }
.scroll svg { width: 10px; height: 13px; }

.mdi { display: grid; grid-template-columns: 848fr 874fr 834fr; row-gap: 1px; padding: 0 2px 2px 3px; background: #666; }
.child { position: relative; min-width: 0; padding: 0 9px 10px; background: linear-gradient(#bfcddf, #d7e4f2 36px); border-radius: 7px 7px 0 0; box-shadow: inset 1px 1px #555, inset -1px 0 #555; }
.caption { display: flex; align-items: center; gap: 4px; height: 35px; padding: 8px 3px 0 3px; color: #47525c; }
.caption h2 { flex: 1; font-size: 14px; min-width: 0; overflow: hidden; }
.caption button, .docked button { width: 37px; height: 22px; border: 1px solid #8593ad; border-radius: 2px; box-shadow: inset 0 0 0 1px #dfe8f2; background: linear-gradient(#c8d5e5, #bccbdd); display: grid; place-items: center; }
.caption button svg, .docked svg:not(.logo) { width: 16px; height: 16px; }
.frame { border: 1px solid #fff; border-left-color: #777; border-top: 2px solid #777; background: #434a4f; }
.info { display: flex; gap: 6px; height: 19px; padding-left: 5px; margin-right: 73px; overflow: hidden; color: #fff; font: 16px/19px "Liberation Sans", Arial, sans-serif; }
.info span { flex: none; white-space: pre; }
.info mark { flex: none; background: #fff; color: #555; padding: 0 0 0 1px; }
.info .muted { color: #808080; margin-left: 10px; }
.plot { width: 100%; height: auto; font: 16px "Liberation Sans", Arial, sans-serif; fill: #fff; }
.plot text { white-space: pre; }
.plot .dark { fill: #444; }
.hscroll { display: flex; align-items: center; height: 20px; padding-right: 3px; background: #ececec; border-top: 1px solid #fff; }
.hscroll button { width: 19px; height: 18px; display: grid; place-items: center; }
.hscroll svg { width: 8px; height: 10px; fill: #444; }
.track { flex: 1; }
.hscroll .thumb { display: flex; justify-content: center; align-items: center; gap: 2px; border: 1px solid #999; border-radius: 2px; background: linear-gradient(#f6f6f6, #d2d2d2); }
.thumb i { width: 2px; height: 9px; background: #666; }
.docked { position: absolute; left: 3px; bottom: 1px; display: flex; align-items: center; gap: 4px; height: 31px; width: 160px; padding: 0 3px 0 7px; background: #ccdaea; border: 1px solid #555; border-radius: 6px 6px 0 0; }
.child:nth-child(5) .docked { left: 9px; }
.docked i { width: 1px; height: 10px; background: #a87; }

.taskbar { display: flex; align-items: center; height: 35px; padding-left: 12px; background: linear-gradient(90deg, #3a3a3a, #565656 8%, #4a4a4a 24%, #575757 34%, #4e4e4e 60%, #454545 72%, #505050 77%, #3c3c3c 80%, #424242); border-top: 1px solid #222; }
.orb { position: relative; width: 43px; height: 43px; border-radius: 50%; margin: -8px 16px 0 0; flex: none; display: grid; place-items: center; border: 1px solid #123; box-shadow: 0 0 0 1px #7fa6bd; background: radial-gradient(circle at 50% 100%, #23d0ff 0, #0e5f9d 40%, #0d3a68 65%, #7ea4bd 100%); }
.orb svg { width: 28px; height: 28px; }
.app { width: 47px; height: 32px; margin-right: 3px; display: grid; place-items: center; border-radius: 3px; flex: none; }
.ico { width: 20px; height: 20px; }
.app.on { border: 1px solid #111; box-shadow: inset 0 0 0 1px #b5b5b5; background: linear-gradient(135deg, #a5a5a5, #6a6a6a 60%, #5a5a5a); }
.app.lit { border: 1px solid #222; box-shadow: inset 0 0 0 1px #fff; background: linear-gradient(135deg, #e2e2e2, #aaa); }
.tray { display: flex; gap: 10px; margin-left: auto; }
.tray svg { width: 20px; height: 20px; }
.tray svg:nth-child(2) { margin: 0 6px 0 4px; }
.clock { color: #fff; font-size: 14px; margin: 0 20px 0 26px; }
.peek { width: 14px; height: 33px; border: 1px solid #999; background: linear-gradient(90deg, #333, #555); }

.taskman {
  position: absolute; left: 1248px; top: 541px; width: 670px; padding: 0 7px 7px; border: 1px solid #1d1f21; border-radius: 8px;
  background: linear-gradient(100deg, rgba(110, 116, 120, .7), rgba(60, 66, 68, .7) 25%, rgba(85, 90, 94, .7) 50%, rgba(120, 125, 130, .7));
  backdrop-filter: blur(5px); box-shadow: inset 0 0 0 1px rgba(255, 255, 255, .4), 0 4px 14px rgba(0, 0, 0, .6);
}
.tmtitle { display: flex; align-items: center; height: 33px; padding-left: 1px; }
.tmtitle h2 { margin-left: 4px; font-size: 14px; text-shadow: 0 0 8px #ddd, 0 0 8px #ddd, 0 0 10px #ccc, 0 0 12px #ccc; }
.tmtitle .syscmds { margin-right: -1px; border-color: #999; }
.tmclient { background: #f0f0f0; border: 1px solid #333; font-size: 12px; line-height: 18px; }
.tmmenu { display: flex; gap: 14px; height: 25px; padding: 0 6px; font-size: 14px; color: #6d6d6d; background: linear-gradient(#fff, #eef1f9 36%, #d4dbed 37%, #e0e5f4); border-bottom: 1px solid #bcc3d8; }
.tmtabs { display: flex; align-items: flex-end; height: 30px; padding-left: 6px; }
.tmtabs button { height: 22px; padding: 0 5px; border: 1px solid #898c95; border-bottom: 0; background: linear-gradient(#f2f2f2, #ddd); margin-right: -1px; }
.tmtabs .on { position: relative; height: 25px; padding: 0 8px 3px; margin-bottom: -1px; background: #fff; }
.page { margin: 0 6px; padding: 10px 17px 0 15px; height: 526px; background: #fff; border: 1px solid #898c95; }
fieldset { margin: 0; border: 1px solid #d5dfe5; border-radius: 4px; padding: 0 10px; min-width: 0; }
legend { padding: 0 3px; margin-left: -4px; line-height: 18px; }
.meters { display: flex; gap: 18px; height: 162px; }
.meters fieldset { height: 157px; }
.meters .narrow { width: 105px; }
.meters .wide { width: 485px; }
.gauge, .graph { border: 1px solid; border-color: #888 #eee #eee #888; border-left-width: 2px; border-top-width: 2px; }
.gauge { width: 82px; height: 126px; margin-top: 2px; background: #000; color: #00ff00; display: flex; flex-direction: column; align-items: center; }
.bars { display: flex; gap: 1px; margin-top: 5px; height: 96px; }
.bars i { width: 16px; height: 96px; background: linear-gradient(#0000 94px, #00ff00 94px), repeating-linear-gradient(#005c00 0 1px, #002a00 1px 3px); }
.full .bars i { background: linear-gradient(#002a00 5px, #0000 5px), repeating-linear-gradient(#00ff00 0 2px, #003000 2px 3px); }
.gauge output { line-height: 20px; }
.graphs { display: flex; gap: 7px; margin-top: 2px; }
.graph { flex: 1; min-width: 0; height: 126px; background-color: #000; background-image: linear-gradient(#008040 1px, #0000 1px), linear-gradient(90deg, #008040 1px, #0000 1px); background-size: 12px 12px; background-position: 5px 0; }
.facts { display: flex; gap: 17px; margin-top: 4px; }
.facts .col { width: 197px; }
.facts .col:last-child { width: 199px; }
.facts fieldset { margin-bottom: 10px; padding-bottom: 5px; }
table { width: 100%; border-collapse: collapse; }
th, td { padding: 0; font-weight: 400; text-align: left; height: 18px; line-height: 18px; }
td { text-align: right; }
.resmon { width: 100%; height: 27px; margin-top: 12px; border: 2px solid #2fa5d6; border-radius: 3px; box-shadow: inset 0 0 0 1px #b5e9fb; background: linear-gradient(#eaf3f8, #d5e3ea 50%, #c0d4de 51%, #c8d9e2); }
.tmstatus { display: flex; height: 27px; margin-top: 7px; border-top: 1px solid #a0a0a0; background: #f1edec; font-size: 14px; line-height: 28px; }
.tmstatus span { padding: 0 3px; border-right: 1px solid #ddd; }
.tmstatus span:nth-child(1) { width: 132px; }
.tmstatus span:nth-child(2) { width: 165px; }
.tmstatus span:nth-child(3) { width: 332px; }

.arrows { position: absolute; inset: 0; width: 100%; pointer-events: none; filter: drop-shadow(1px 3px 2px rgba(0, 0, 0, .35)); }
</style>
